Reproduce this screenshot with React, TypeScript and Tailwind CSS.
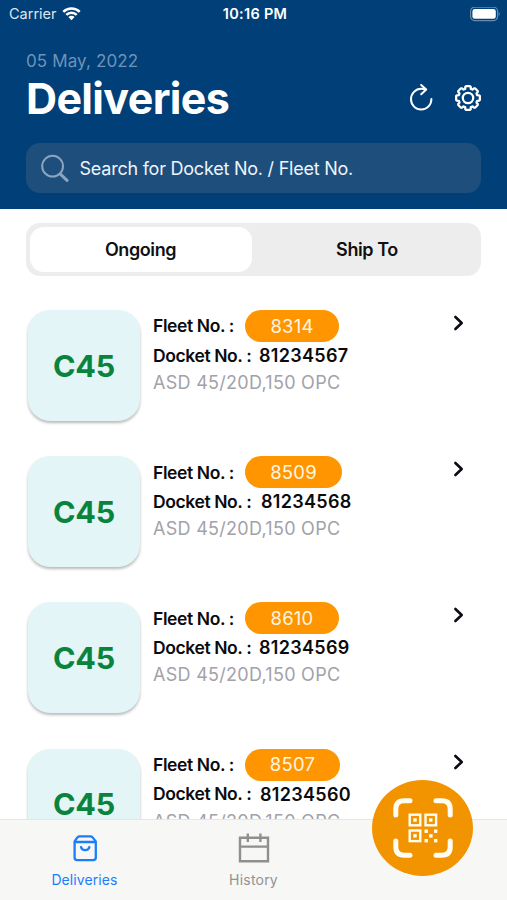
import { Fragment } from 'react';

interface Delivery {
  grade: string;
  fleetNo: string;
  docketNo: string;
  mix: string;
  pillClass: string;
  docketClass: string;
}

const deliveries: Delivery[] = [
  { grade: 'C45', fleetNo: '8314', docketNo: '81234567', mix: 'ASD 45/20D,150 OPC', pillClass: 'w-[94px]', docketClass: 'ml-[8px]' },
  { grade: 'C45', fleetNo: '8509', docketNo: '81234568', mix: 'ASD 45/20D,150 OPC', pillClass: 'w-[97px]', docketClass: 'ml-[10px]' },
  { grade: 'C45', fleetNo: '8610', docketNo: '81234569', mix: 'ASD 45/20D,150 OPC', pillClass: 'w-[94px]', docketClass: 'ml-[8px]' },
  { grade: 'C45', fleetNo: '8507', docketNo: '81234560', mix: 'ASD 45/20D,150 OPC', pillClass: 'w-[95px]', docketClass: 'ml-[9px]' },
];

// outline of an 8 tooth cog centred on 0,0
const gearPath = () => {
  const points: string[] = [];
  for (let i = 0; i < 8; i++) {
    const steps = [[-17, 9.6], [-13.5, 11.4], [-9, 12], [9, 12], [13.5, 11.4], [17, 9.6]];
    steps.forEach(([deg, r]) => {
      const a = ((i * 45 + deg) * Math.PI) / 180;
      points.push(`${(Math.cos(a) * r).toFixed(2)} ${(Math.sin(a) * r).toFixed(2)}`);
    });
  }
  return `M${points.join('L')}Z`;
};

const WifiIcon = () => (
  <svg width="19" height="15" viewBox="0 0 19 15" fill="white">
    <path d="M0.4 3.9 A13 13 0 0 1 18.6 3.9 L16.8 5.8 A10.4 10.4 0 0 0 2.2 5.8Z" />
    <path d="M3.4 7 A8.7 8.7 0 0 1 15.6 7 L13.8 8.8 A6.1 6.1 0 0 0 5.2 8.8Z" />
    <path d="M6.4 10 A4.4 4.4 0 0 1 12.6 10 L9.5 13.2Z" />
  </svg>
);

const BatteryIcon = () => (
  <svg width="31" height="15" viewBox="0 0 31 15">
    <rect x="0.6" y="0.2" width="27" height="13.4" rx="4" fill="none" stroke="#fff" strokeOpacity="0.4" strokeWidth="1.2" />
    <rect x="2.4" y="2" width="23.4" height="9.8" rx="2.4" fill="#fff" />
    <path d="M28.8 4.6 Q30.6 6.9 28.8 9.2Z" fill="#fff" fillOpacity="0.5" />
  </svg>
);

const RefreshIcon = () => (
  <svg width="24" height="28" viewBox="0 0 24 28" fill="none" stroke="white" strokeWidth="2" strokeLinecap="round" strokeLinejoin="round">
    <path d="M22.4 15A10.2 10.4 0 1 1 12.2 4.8Q14.6 4.8 16.4 5.2" />
    <path d="M12.2 0.9L17.2 5.5L12.2 10.3" />
  </svg>
);

const SettingsIcon = () => (
  <svg width="28" height="28" viewBox="-14 -14 28 28" fill="none" stroke="white" strokeWidth="2.3" strokeLinejoin="round">
    <path d={gearPath()} />
    <circle r="5.2" />
  </svg>
);

const SearchIcon = () => (
  <svg width="28" height="28" viewBox="0 0 28 28" fill="none" stroke="#8ba5bf" strokeLinecap="round">
    <circle cx="11.6" cy="12.2" r="10.4" strokeWidth="2" />
    <path d="M19.4 20.2L26 26.4" strokeWidth="3" />
  </svg>
);

const ChevronIcon = () => (
  <svg width="12" height="16" viewBox="0 0 12 16" fill="none" stroke="#0b0b14" strokeWidth="2.6" strokeLinecap="round" strokeLinejoin="round">
    <path d="M2.4 2L8.7 8L2.4 14" />
  </svg>
);

const BagIcon = () => (
  <svg width="26" height="28" viewBox="0 0 26 28" fill="none" stroke="#1a7efb" strokeWidth="2.3" strokeLinecap="round" strokeLinejoin="round">
    <path d="M2.6 7.4L5.4 3.4Q6.3 2.4 7.6 2.4H18.4Q19.7 2.4 20.6 3.4L23.8 7.4V23.6Q23.8 26.2 21.2 26.2H5.2Q2.6 26.2 2.6 23.6ZM2.6 8H23.8" />
    <path d="M9 13A4.3 4.1 0 0 0 17.4 13" />
  </svg>
);

const CalendarIcon = () => (
  <svg width="32" height="30" viewBox="0 0 32 30" fill="none" stroke="#8f8f8f" strokeWidth="2.4">
    <path d="M2 4.7H30V28.2H2ZM2 13.6H30M9.8 0.6V9M22.4 0.6V9" />
  </svg>
);

const finders = [[1.2, 1.2], [17, 1.2], [1.2, 17]];
const dots = [[16, 16], [25.5, 16], [20.7, 20.7], [16, 25.5], [25.5, 25.5]];

const ScanIcon = () => (
  <svg width="60" height="60" viewBox="0 0 60 60" fill="none" stroke="#fffdf2">
    <path
      d="M2.8 17V11Q2.8 2.8 11 2.8H17M43 2.8H49Q57.2 2.8 57.2 11V17M57.2 43V49Q57.2 57.2 49 57.2H43M17 57.2H11Q2.8 57.2 2.8 49V43"
      strokeWidth="5"
      strokeLinecap="round"
    />
    <g transform="translate(15.5 15.5)">
      {finders.map(([x, y]) => (
        <Fragment key={`${x}-${y}`}>
          <rect x={x} y={y} width="10.6" height="10.6" strokeWidth="2.4" />
          <rect x={x + 3.6} y={y + 3.6} width="3.4" height="3.4" fill="#fffdf2" stroke="none" />
        </Fragment>
      ))}
      {dots.map(([x, y]) => (
        <rect key={`${x}-${y}`} x={x} y={y} width="3.4" height="3.4" fill="#fffdf2" stroke="none" />
      ))}
    </g>
  </svg>
);

const DeliveryRow = ({ item }: { item: Delivery }) => (
  <div className="flex h-[146.2px] items-start pl-7">
    <div className="flex h-[111px] w-28 shrink-0 items-center justify-center rounded-[22px] bg-[#e3f5f6] shadow-[0_2px_3px_rgba(0,0,0,0.28)]">
      <span className="text-[30.5px] font-bold tracking-[-0.2px] text-[#0a843d]">{item.grade}</span>
    </div>
    <div className="ml-[13px] flex-1 whitespace-nowrap text-[17.5px] font-semibold text-[#0b0b0f]">
      <div className="flex h-8 items-center">
        <span className="w-[92px] pt-px tracking-[-0.4px]">Fleet No. :</span>
        <span className={`flex h-8 items-center justify-center rounded-full bg-[#ff9500] pt-px text-[18.5px] font-normal tracking-[0.2px] text-[#fff6e0] ${item.pillClass}`}>
          {item.fleetNo}
        </span>
      </div>
      <div className="flex h-[27px] items-center">
        <span className="w-[98px] pt-px tracking-[-0.4px]">Docket No. :</span>
        <span className={`text-[18px] tracking-[0.3px] ${item.docketClass}`}>{item.docketNo}</span>
      </div>
      <div className="flex h-[27px] items-center text-[18px] font-normal tracking-[0.28px] text-[#a2a2a8]">{item.mix}</div>
    </div>
    <div className="mr-[42px] mt-[5px]">
      <ChevronIcon />
    </div>
  </div>
);

export default function App() {
  return (
    <div className="relative flex h-[900px] w-[507px] flex-col overflow-hidden bg-white font-['Inter',sans-serif]">
      <header className="h-[208.5px] shrink-0 bg-[#003f77]">
        <div className="grid h-7 grid-cols-3 items-center pl-[9px] pr-[6px] text-[14px] text-white">
          <div className="flex items-center gap-[5px]">
            <span className="text-[14.5px] text-[#dce6ef]">Carrier</span>
            <WifiIcon />
          </div>
          <span className="text-center text-[14.5px] font-semibold tracking-[0.3px]">10:16 PM</span>
          <div className="flex justify-end">
            <BatteryIcon />
          </div>
        </div>
        <div className="flex justify-between pl-[26px] pr-[25px] pt-[20px]">
          <div>
            <p className="h-[25px] pt-px text-[17px] leading-[25px] tracking-[0.12px] text-[#6e93b7]">05 May, 2022</p>
            <h1 className="h-[52px] text-[43px] font-bold leading-[50px] tracking-[-0.65px] text-white">Deliveries</h1>
          </div>
          <div className="flex gap-[21px] pt-[36px]">
            <RefreshIcon />
            <SettingsIcon />
          </div>
        </div>
        <div className="mx-[26px] mt-[18px] flex h-[50px] items-center rounded-[14px] bg-[#1e4e7c] pl-[15px]">
          <SearchIcon />
          <span className="ml-[10.5px] text-[18px] tracking-[-0.23px] text-[#eef4fa]">Search for Docket No. / Fleet No.</span>
        </div>
      </header>

      <main className="min-h-0 flex-1 overflow-hidden">
        <div className="mx-[26px] mt-[14.5px] flex h-[53px] rounded-[14px] bg-[#ededed] p-1 text-[18px] font-semibold tracking-[-0.4px] text-[#101012]">
          <div className="flex w-[222px] items-center justify-center rounded-[14px] bg-white pr-px">Ongoing</div>
          <div className="flex flex-1 items-center justify-center pl-[5px]">Ship To</div>
        </div>
        <div className="mt-[34px]">
          {deliveries.map((item) => (
            <DeliveryRow key={item.docketNo} item={item} />
          ))}
        </div>
      </main>

      <nav className="grid h-[81px] shrink-0 grid-cols-3 border-t border-[#e6e6e6] bg-[#f7f7f6] text-[14px]">
        <div className="flex flex-col items-center pt-[14px] text-[#1a7efb]">
          <BagIcon />
          <span className="mt-[7px] tracking-[0.1px]">Deliveries</span>
        </div>
        <div className="flex flex-col items-center pt-[13px] text-[#929292]">
          <CalendarIcon />
          <span className="mt-[6px] tracking-[0.2px]">History</span>
        </div>
      </nav>

      <button className="absolute bottom-6 right-[34px] flex h-24 w-[101px] items-center justify-center rounded-[50%] bg-[#f29400]">
        <ScanIcon />
      </button>
    </div>
  );
}
